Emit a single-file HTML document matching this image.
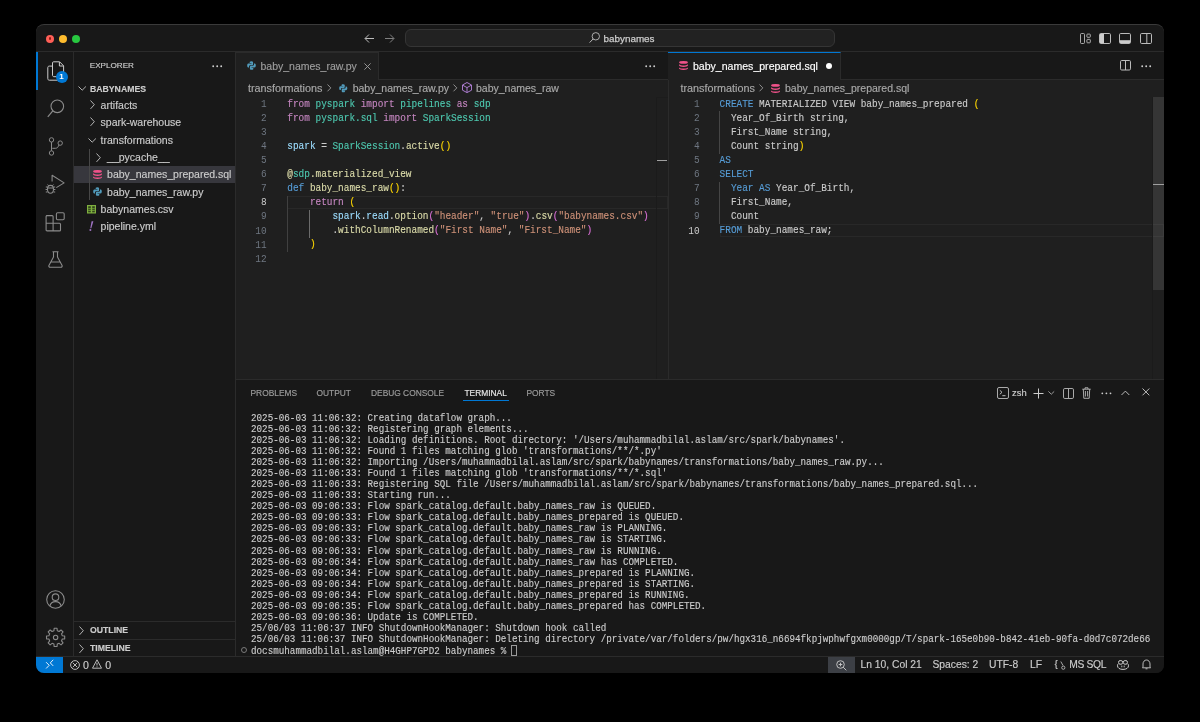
<!DOCTYPE html>
<html><head><meta charset="utf-8">
<style>
html,body{margin:0;padding:0;}
body{width:1200px;height:722px;background:#000;position:relative;overflow:hidden;font-family:"Liberation Sans",sans-serif;color:#cccccc;}
.a{position:absolute;}
#win{will-change:transform;position:absolute;left:36px;top:24px;width:1128px;height:649.3px;border-radius:8px;overflow:hidden;background:#181818;}
#in{position:absolute;left:-36px;top:-24px;width:1200px;height:722px;}
.t{position:absolute;white-space:pre;-webkit-text-stroke-width:0.15px;}
.mono{font-family:"Liberation Mono",monospace;}
.ui{font-size:10.5px;color:#cccccc;}
.code{-webkit-text-stroke-width:0.12px;position:absolute;font-family:"Liberation Mono",monospace;font-size:9.42px;line-height:12.5625px;transform:scaleY(1.12);transform-origin:0 0;white-space:pre;color:#cccccc;}
.ln{position:absolute;font-family:"Liberation Mono",monospace;font-size:9.42px;line-height:12.5625px;transform:scaleY(1.12);transform-origin:0 0;white-space:pre;color:#6e7681;text-align:right;}
.k{color:#c586c0}.c{color:#4ec9b0}.v{color:#9cdcfe}.f{color:#dcdcaa}.b1{color:#ffd700}.b2{color:#da70d6}.s{color:#ce9178}.kw{color:#569cd6}
.term{-webkit-text-stroke-width:0.12px;position:absolute;font-family:"Liberation Mono",monospace;font-size:9.25px;line-height:9.651px;transform:scaleY(1.147);transform-origin:0 0;white-space:pre;color:#cccccc;}
svg{position:absolute;overflow:visible;}
</style></head>
<body>
<div id="win"><div id="in">
  <!-- title bar -->
  <div class="a" style="left:36px;top:24px;width:1128px;height:28px;background:#181818;border-bottom:1px solid #2b2b2b;box-sizing:border-box;"></div>
  <!-- traffic lights -->
  <div class="a" style="left:46px;top:34.5px;width:8px;height:8px;border-radius:50%;background:#ff5f57;"></div>
  <div class="a" style="left:48.6px;top:37px;width:2.8px;height:2.8px;border-radius:50%;background:#8f1d14;"></div>
  <div class="a" style="left:59.2px;top:34.5px;width:8px;height:8px;border-radius:50%;background:#febc2e;"></div>
  <div class="a" style="left:72.2px;top:34.5px;width:8px;height:8px;border-radius:50%;background:#28c840;"></div>
  <!-- nav arrows -->
  <svg style="left:363.8px;top:33px" width="11" height="11" viewBox="0 0 11 11"><path d="M10 5.5H1.2M5 1.5L1 5.5L5 9.5" fill="none" stroke="#bdbdbd" stroke-width="1"/></svg>
  <svg style="left:383.6px;top:33px" width="11" height="11" viewBox="0 0 11 11"><path d="M1 5.5H9.8M6 1.5L10 5.5L6 9.5" fill="none" stroke="#808080" stroke-width="1"/></svg>
  <!-- command center -->
  <div class="a" style="left:405.2px;top:28.8px;width:429.8px;height:18.6px;box-sizing:border-box;border:1px solid #353535;border-radius:6px;background:#222222;"></div>
  <svg style="left:589px;top:32px" width="11" height="11" viewBox="0 0 11 11"><circle cx="6.8" cy="4.3" r="3.7" fill="none" stroke="#bbbbbb" stroke-width="0.9"/><path d="M4.2 6.9L0.6 10.6" stroke="#bbbbbb" stroke-width="1"/></svg>
  <div class="t" style="left:603.5px;top:30.5px;font-size:9.9px;line-height:15px;color:#cccccc;-webkit-text-stroke:0.25px #cccccc;">babynames</div>
  <!-- layout icons -->
  <svg style="left:1079.5px;top:32.7px" width="12" height="11" viewBox="0 0 12 11"><rect x="0.5" y="0.5" width="4" height="10" rx="1" fill="none" stroke="#bbbbbb" stroke-width="0.9"/><rect x="6.9" y="1.1" width="3.4" height="3.2" rx="0.6" fill="none" stroke="#bbbbbb" stroke-width="0.9"/><rect x="6.9" y="6.4" width="3.4" height="3.4" rx="0.6" fill="none" stroke="#bbbbbb" stroke-width="0.9"/></svg>
  <svg style="left:1099px;top:32.5px" width="12" height="11" viewBox="0 0 12 11"><rect x="0.5" y="0.5" width="11" height="10" rx="1.2" fill="none" stroke="#bbbbbb"/><rect x="1" y="1" width="4" height="9" fill="#cccccc"/></svg>
  <svg style="left:1119px;top:32.5px" width="12" height="11" viewBox="0 0 12 11"><rect x="0.5" y="0.5" width="11" height="10" rx="1.2" fill="none" stroke="#bbbbbb"/><rect x="1" y="7.2" width="10" height="2.8" fill="#cccccc"/></svg>
  <svg style="left:1139.5px;top:32.5px" width="12" height="11" viewBox="0 0 12 11"><rect x="0.5" y="0.5" width="11" height="10" rx="1.2" fill="none" stroke="#bbbbbb"/><path d="M6.8 1V10" stroke="#bbbbbb"/></svg>

  <!-- activity bar -->
  <div class="a" style="left:36px;top:52px;width:38px;height:604px;background:#181818;border-right:1px solid #2b2b2b;box-sizing:border-box;"></div>
  <div class="a" style="left:36px;top:52px;width:2px;height:37.5px;background:#0078d4;"></div>


  <!-- activity icons -->
  <svg style="left:46.5px;top:61px" width="18" height="20" viewBox="0 0 18 20"><path d="M5.5 5.1H2.3C1.4 5.1 0.8 5.7 0.8 6.6V17.7C0.8 18.6 1.4 19.2 2.3 19.2H10.2C11.1 19.2 11.7 18.6 11.7 17.7V16.3" fill="none" stroke="#cccccc" stroke-width="1"/><path d="M6.6 0.8H12.6L16.6 4.8V14.2C16.6 15.1 16 15.7 15.1 15.7H7C6.1 15.7 5.5 15.1 5.5 14.2V1.9C5.5 1.2 5.9 0.8 6.6 0.8Z M12.4 1V5H16.4" fill="none" stroke="#cccccc" stroke-width="1"/></svg>
  <div class="a" style="left:55.7px;top:71.2px;width:12px;height:12px;border-radius:50%;background:#0078d4;"></div>
  <div class="t" style="left:59.3px;top:73.2px;font-size:8px;line-height:8px;font-weight:bold;color:#ffffff;-webkit-text-stroke-width:0;">1</div>
  <svg style="left:47px;top:98.8px" width="18" height="19" viewBox="0 0 18 19"><circle cx="10.3" cy="7.3" r="6.3" fill="none" stroke="#8a8a8a" stroke-width="1.1"/><path d="M5.8 11.8L0.8 17.8" stroke="#8a8a8a" stroke-width="1.2"/></svg>
  <svg style="left:47.5px;top:136.5px" width="15" height="19" viewBox="0 0 15 19"><circle cx="3.5" cy="2.9" r="2.2" fill="none" stroke="#8a8a8a" stroke-width="1"/><circle cx="3.5" cy="16" r="2.2" fill="none" stroke="#8a8a8a" stroke-width="1"/><circle cx="12.2" cy="6.1" r="2.2" fill="none" stroke="#8a8a8a" stroke-width="1"/><path d="M3.5 5.1V13.8M11 8C10.2 9.8 9.5 11.3 7.3 11.3H4.3" fill="none" stroke="#8a8a8a" stroke-width="1"/></svg>
  <svg style="left:45px;top:167.5px" width="20" height="26" viewBox="0 0 20 26"><path d="M7.1 13.5V7.2L19.1 14.9L11.3 19.6" fill="none" stroke="#8a8a8a" stroke-width="1.1" stroke-linejoin="round"/><ellipse cx="5.5" cy="21.3" rx="3" ry="3.9" fill="none" stroke="#8a8a8a" stroke-width="1.1"/><path d="M2.5 19H0.8M2.5 21.5H0.6M2.5 24H0.8M8.5 19H10.2M8.5 21.5H10.4M8.5 24H10.2M3.6 17.7L2.6 16.5M7.4 17.7L8.4 16.5M2.6 20H8.4" stroke="#8a8a8a" stroke-width="1"/></svg>
  <svg style="left:45.3px;top:211.8px" width="20" height="20" viewBox="0 0 20 20"><path d="M1.5 3.6H7.1C7.7 3.6 8.1 4 8.1 4.6V11.3H14.5C15.1 11.3 15.5 11.7 15.5 12.3V17.9C15.5 18.5 15.1 18.9 14.5 18.9H2.1C1.5 18.9 1.1 18.5 1.1 17.9V4.6C1.1 4 1.5 3.6 2.1 3.6Z M1.1 11.3H8.1V18.9" fill="none" stroke="#8a8a8a" stroke-width="1.1" stroke-linejoin="round"/><rect x="11.4" y="0.8" width="7.8" height="6.9" rx="1.2" fill="none" stroke="#8a8a8a" stroke-width="1.1"/></svg>
  <svg style="left:47.5px;top:251px" width="15" height="17" viewBox="0 0 15 17"><path d="M4.5 0.8H10.5M5.5 0.8V6L0.9 14.4C0.6 15.3 1.1 16.2 2 16.2H13C13.9 16.2 14.4 15.3 14.1 14.4L9.5 6V0.8M2.8 11H12.2" fill="none" stroke="#8a8a8a" stroke-width="1.1" stroke-linejoin="round"/></svg>
  <svg style="left:45.7px;top:590px" width="19" height="19" viewBox="0 0 19 19"><circle cx="9.5" cy="9.5" r="8.8" fill="none" stroke="#8a8a8a" stroke-width="1.1"/><circle cx="9.5" cy="7.2" r="3.3" fill="none" stroke="#8a8a8a" stroke-width="1.1"/><path d="M3.8 16.2C4.5 13.3 6.5 11.6 9.5 11.6C12.5 11.6 14.5 13.3 15.2 16.2" fill="none" stroke="#8a8a8a" stroke-width="1.1"/></svg>
  <svg style="left:45.7px;top:627.5px" width="19" height="19" viewBox="0 0 19 19"><path d="M7.93 2.70 L8.16 0.31 L11.04 0.31 L11.27 2.70 L13.15 3.49 L15.01 1.96 L17.04 3.99 L15.51 5.85 L16.30 7.73 L18.69 7.96 L18.69 10.84 L16.30 11.07 L15.51 12.95 L17.04 14.81 L15.01 16.84 L13.15 15.31 L11.27 16.10 L11.04 18.49 L8.16 18.49 L7.93 16.10 L6.05 15.31 L4.19 16.84 L2.16 14.81 L3.69 12.95 L2.90 11.07 L0.51 10.84 L0.51 7.96 L2.90 7.73 L3.69 5.85 L2.16 3.99 L4.19 1.96 L6.05 3.49Z" fill="none" stroke="#8a8a8a" stroke-width="1.1" stroke-linejoin="round"/><circle cx="9.6" cy="9.4" r="2.2" fill="none" stroke="#8a8a8a" stroke-width="1.1"/></svg>

  <!-- sidebar -->
  <div class="a" style="left:74px;top:52px;width:162px;height:604px;background:#181818;border-right:1px solid #2b2b2b;box-sizing:border-box;"></div>
  <div class="t" style="left:89.8px;top:60px;font-size:8.1px;line-height:12px;color:#cccccc;">EXPLORER</div>
  <svg style="left:212px;top:64.5px" width="11" height="3" viewBox="0 0 11 3"><circle cx="1.2" cy="1.3" r="0.95" fill="#cccccc"/><circle cx="5.2" cy="1.3" r="0.95" fill="#cccccc"/><circle cx="9.2" cy="1.3" r="0.95" fill="#cccccc"/></svg>


  <!-- explorer tree -->
  <div class="a" style="left:74px;top:166.2px;width:161px;height:16.4px;background:#37373d;"></div>
  <div class="a" style="left:89.4px;top:148.5px;width:1px;height:51.5px;background:#474747;"></div>
  <svg style="left:78px;top:86px" width="9" height="5" viewBox="0 0 9 5"><path d="M0.5 0.5L4.2 4.2L7.9 0.5" fill="none" stroke="#c5c5c5" stroke-width="0.9"/></svg>
  <div class="t" style="left:90px;top:84.5px;font-size:8.7px;line-height:8.5px;font-weight:bold;color:#cccccc;">BABYNAMES</div>
  <svg style="left:90px;top:100px" width="5" height="10" viewBox="0 0 5 10"><path d="M0.5 0.5L4.3 4.7L0.5 8.9" fill="none" stroke="#c5c5c5" stroke-width="0.9"/></svg>
  <div class="t ui" style="left:100.6px;top:100.1px;line-height:10.5px;">artifacts</div>
  <svg style="left:90px;top:117.3px" width="5" height="10" viewBox="0 0 5 10"><path d="M0.5 0.5L4.3 4.7L0.5 8.9" fill="none" stroke="#c5c5c5" stroke-width="0.9"/></svg>
  <div class="t ui" style="left:100.6px;top:117.3px;line-height:10.5px;">spark-warehouse</div>
  <svg style="left:88px;top:138.2px" width="9" height="5" viewBox="0 0 9 5"><path d="M0.5 0.5L4.2 4.2L7.9 0.5" fill="none" stroke="#c5c5c5" stroke-width="0.9"/></svg>
  <div class="t ui" style="left:100.6px;top:134.6px;line-height:10.5px;">transformations</div>
  <svg style="left:96.2px;top:152.5px" width="5" height="10" viewBox="0 0 5 10"><path d="M0.5 0.5L4.3 4.7L0.5 8.9" fill="none" stroke="#c5c5c5" stroke-width="0.9"/></svg>
  <div class="t ui" style="left:107.1px;top:151.9px;line-height:10.5px;">__pycache__</div>
  <!-- sql icon -->
  <svg style="left:93px;top:170px" width="9" height="9" viewBox="0 0 9 9"><g fill="#f0528a"><ellipse cx="4.5" cy="1.4" rx="4.4" ry="1.4"/><path d="M0.1 3.2C1 4.1 2.6 4.4 4.5 4.4C6.4 4.4 8 4.1 8.9 3.2V4.6C8.9 5.5 6.9 6 4.5 6C2.1 6 0.1 5.5 0.1 4.6Z"/><path d="M0.1 6.4C1 7.3 2.6 7.6 4.5 7.6C6.4 7.6 8 7.3 8.9 6.4V7.6C8.9 8.4 6.9 8.9 4.5 8.9C2.1 8.9 0.1 8.4 0.1 7.6Z"/></g></svg>
  <div class="t ui" style="left:107.1px;top:169.2px;line-height:10.5px;">baby_names_prepared.sql</div>
  <!-- python icon -->
  <svg style="left:93px;top:187.3px" width="9" height="9" viewBox="0 0 9 9"><path d="M4.4 0.2C2.6 0.2 2.7 1 2.7 1V2.1H4.5V2.5H1.5C1.5 2.5 0.2 2.4 0.2 4.4C0.2 6.4 1.3 6.4 1.3 6.4H2V5.4C2 5.4 2 4.3 3.1 4.3H5C5 4.3 6.1 4.3 6.1 3.3V1.3C6.1 1.3 6.2 0.2 4.4 0.2Z" fill="#519aba"/><path d="M4.6 8.8C6.4 8.8 6.3 8 6.3 8V6.9H4.5V6.5H7.5C7.5 6.5 8.8 6.6 8.8 4.6C8.8 2.6 7.7 2.6 7.7 2.6H7V3.6C7 3.6 7 4.7 5.9 4.7H4C4 4.7 2.9 4.7 2.9 5.7V7.7C2.9 7.7 2.8 8.8 4.6 8.8Z" fill="#519aba"/></svg>
  <div class="t ui" style="left:107.1px;top:186.5px;line-height:10.5px;">baby_names_raw.py</div>
  <!-- csv icon -->
  <svg style="left:86.5px;top:204.6px" width="9" height="8.5" viewBox="0 0 9 8.5"><rect x="0" y="0" width="9" height="8.5" fill="#7fb03f"/><g fill="#31421c"><rect x="1.2" y="1.2" width="2.6" height="6.1"/><rect x="5.2" y="1.2" width="2.6" height="6.1"/></g><g fill="#7fb03f"><rect x="1.2" y="3.4" width="6.6" height="0.7"/><rect x="1.2" y="5.3" width="6.6" height="0.7"/></g></svg>
  <div class="t ui" style="left:100.6px;top:203.7px;line-height:10.5px;">babynames.csv</div>
  <svg style="left:88.5px;top:221px" width="5" height="10" viewBox="0 0 5 10"><path d="M2.6 0.3L4.4 0.3L2.3 7.2L1.3 7.2Z" fill="#a074c4"/><circle cx="1.4" cy="9" r="1" fill="#a074c4"/></svg>
  <div class="t ui" style="left:100.6px;top:221px;line-height:10.5px;">pipeline.yml</div>
  <!-- outline / timeline -->
  <div class="a" style="left:74px;top:621px;width:161px;height:1px;background:#2b2b2b;"></div>
  <div class="a" style="left:74px;top:639px;width:161px;height:1px;background:#2b2b2b;"></div>
  <svg style="left:79px;top:626px" width="5" height="10" viewBox="0 0 5 10"><path d="M0.5 0.5L4.3 4.7L0.5 8.9" fill="none" stroke="#c5c5c5" stroke-width="0.9"/></svg>
  <div class="t" style="left:90px;top:626.3px;font-size:8.7px;line-height:8.5px;font-weight:bold;color:#cccccc;">OUTLINE</div>
  <svg style="left:79px;top:643.6px" width="5" height="10" viewBox="0 0 5 10"><path d="M0.5 0.5L4.3 4.7L0.5 8.9" fill="none" stroke="#c5c5c5" stroke-width="0.9"/></svg>
  <div class="t" style="left:90px;top:643.7px;font-size:8.7px;line-height:8.5px;font-weight:bold;color:#cccccc;">TIMELINE</div>

  <!-- editor group 1 -->
  <div class="a" style="left:236px;top:52px;width:433px;height:328px;background:#1f1f1f;"></div>
  <div class="a" style="left:236px;top:52px;width:433px;height:27.5px;background:#181818;border-bottom:1px solid #2b2b2b;box-sizing:border-box;"></div>
  <div class="a" style="left:236px;top:52px;width:143px;height:28px;background:#1f1f1f;border-right:1px solid #2b2b2b;border-top:1px solid #2b2b2b;box-sizing:border-box;"></div>

  <!-- editor group 2 -->
  <div class="a" style="left:668px;top:52px;width:496px;height:328px;background:#1f1f1f;border-left:1px solid #2b2b2b;box-sizing:border-box;"></div>
  <div class="a" style="left:668px;top:52px;width:496px;height:27.5px;background:#181818;border-bottom:1px solid #2b2b2b;border-left:1px solid #2b2b2b;box-sizing:border-box;"></div>
  <div class="a" style="left:668px;top:52px;width:173px;height:28px;background:#1f1f1f;border-right:1px solid #2b2b2b;border-top:1px solid #0078d4;box-sizing:border-box;"></div>


  <!-- tab 1 -->
  <svg style="left:246.6px;top:61.4px" width="9" height="9" viewBox="0 0 9 9"><path d="M4.4 0.2C2.6 0.2 2.7 1 2.7 1V2.1H4.5V2.5H1.5C1.5 2.5 0.2 2.4 0.2 4.4C0.2 6.4 1.3 6.4 1.3 6.4H2V5.4C2 5.4 2 4.3 3.1 4.3H5C5 4.3 6.1 4.3 6.1 3.3V1.3C6.1 1.3 6.2 0.2 4.4 0.2Z" fill="#519aba"/><path d="M4.6 8.8C6.4 8.8 6.3 8 6.3 8V6.9H4.5V6.5H7.5C7.5 6.5 8.8 6.6 8.8 4.6C8.8 2.6 7.7 2.6 7.7 2.6H7V3.6C7 3.6 7 4.7 5.9 4.7H4C4 4.7 2.9 4.7 2.9 5.7V7.7C2.9 7.7 2.8 8.8 4.6 8.8Z" fill="#519aba"/></svg>
  <div class="t" style="left:260.5px;top:60.6px;font-size:10.5px;line-height:10.4px;color:#9d9d9d;">baby_names_raw.py</div>
  <svg style="left:364px;top:62.5px" width="7" height="7" viewBox="0 0 7 7"><path d="M0.4 0.4L6.6 6.6M6.6 0.4L0.4 6.6" stroke="#a0a0a0" stroke-width="0.9"/></svg>
  <svg style="left:645px;top:64.5px" width="11" height="3" viewBox="0 0 11 3"><circle cx="1.2" cy="1.3" r="0.95" fill="#cccccc"/><circle cx="5.2" cy="1.3" r="0.95" fill="#cccccc"/><circle cx="9.2" cy="1.3" r="0.95" fill="#cccccc"/></svg>
  <!-- breadcrumb 1 -->
  <div class="t" style="left:248px;top:82.7px;font-size:10.8px;line-height:10.5px;color:#a9a9a9;">transformations</div>
  <svg style="left:326.8px;top:83.7px" width="5" height="8" viewBox="0 0 5 8"><path d="M0.5 0.5L3.8 3.9L0.5 7.3" fill="none" stroke="#a9a9a9" stroke-width="0.8"/></svg>
  <svg style="left:338.5px;top:83.8px" width="8.5" height="8.5" viewBox="0 0 9 9"><path d="M4.4 0.2C2.6 0.2 2.7 1 2.7 1V2.1H4.5V2.5H1.5C1.5 2.5 0.2 2.4 0.2 4.4C0.2 6.4 1.3 6.4 1.3 6.4H2V5.4C2 5.4 2 4.3 3.1 4.3H5C5 4.3 6.1 4.3 6.1 3.3V1.3C6.1 1.3 6.2 0.2 4.4 0.2Z" fill="#519aba"/><path d="M4.6 8.8C6.4 8.8 6.3 8 6.3 8V6.9H4.5V6.5H7.5C7.5 6.5 8.8 6.6 8.8 4.6C8.8 2.6 7.7 2.6 7.7 2.6H7V3.6C7 3.6 7 4.7 5.9 4.7H4C4 4.7 2.9 4.7 2.9 5.7V7.7C2.9 7.7 2.8 8.8 4.6 8.8Z" fill="#519aba"/></svg>
  <div class="t" style="left:352.7px;top:82.9px;font-size:10.5px;line-height:10.5px;color:#a9a9a9;">baby_names_raw.py</div>
  <svg style="left:453.2px;top:83.7px" width="5" height="8" viewBox="0 0 5 8"><path d="M0.5 0.5L3.8 3.9L0.5 7.3" fill="none" stroke="#a9a9a9" stroke-width="0.8"/></svg>
  <svg style="left:462px;top:82.3px" width="10" height="11" viewBox="0 0 10 11"><path d="M5 0.5L9.5 3V8.2L5 10.6L0.5 8.2V3Z M0.7 3.2L5 5.6L9.3 3.2 M5 5.6V10.4" fill="none" stroke="#b180d7" stroke-width="0.95" stroke-linejoin="round"/></svg>
  <div class="t" style="left:476px;top:82.9px;font-size:10.5px;line-height:10.5px;color:#a9a9a9;">baby_names_raw</div>
  <!-- code 1 -->
  <div class="ln" style="left:236px;top:97.90px;width:30.6px;">1</div>
  <div class="ln" style="left:236px;top:111.97px;width:30.6px;">2</div>
  <div class="ln" style="left:236px;top:126.04px;width:30.6px;">3</div>
  <div class="ln" style="left:236px;top:140.11px;width:30.6px;">4</div>
  <div class="ln" style="left:236px;top:154.18px;width:30.6px;">5</div>
  <div class="ln" style="left:236px;top:168.25px;width:30.6px;">6</div>
  <div class="ln" style="left:236px;top:182.32px;width:30.6px;">7</div>
  <div class="ln" style="left:236px;top:196.39px;width:30.6px;"><span style="color:#cccccc">8</span></div>
  <div class="ln" style="left:236px;top:210.46px;width:30.6px;">9</div>
  <div class="ln" style="left:236px;top:224.53px;width:30.6px;">10</div>
  <div class="ln" style="left:236px;top:238.60px;width:30.6px;">11</div>
  <div class="ln" style="left:236px;top:252.67px;width:30.6px;">12</div>
  <div class="a" style="left:287px;top:195.6px;width:381px;height:13.9px;box-sizing:border-box;border:1px solid #282828;"></div>
  <div class="a" style="left:287.1px;top:195.6px;width:1px;height:56.6px;background:#404040;"></div>
  <div class="a" style="left:309.3px;top:209.7px;width:1px;height:28.1px;background:#6b6b6b;"></div>
  <div class="code" style="left:287.3px;top:97.70px;"><span class="k">from</span> <span class="c">pyspark</span> <span class="k">import</span> <span class="c">pipelines</span> <span class="k">as</span> <span class="c">sdp</span></div>
  <div class="code" style="left:287.3px;top:111.77px;"><span class="k">from</span> <span class="c">pyspark.sql</span> <span class="k">import</span> <span class="c">SparkSession</span></div>
  <div class="code" style="left:287.3px;top:139.91px;"><span class="v">spark</span> = <span class="c">SparkSession</span>.<span class="f">active</span><span class="b1">()</span></div>
  <div class="code" style="left:287.3px;top:168.05px;"><span class="f">@</span><span class="c">sdp</span><span class="f">.materialized_view</span></div>
  <div class="code" style="left:287.3px;top:182.12px;"><span class="kw">def</span> <span class="f">baby_names_raw</span><span class="b1">()</span>:</div>
  <div class="code" style="left:287.3px;top:196.19px;">    <span class="k">return</span> <span class="b1">(</span></div>
  <div class="code" style="left:287.3px;top:210.26px;">        <span class="v">spark</span>.<span class="v">read</span>.<span class="f">option</span><span class="b2">(</span><span class="s">"header"</span>, <span class="s">"true"</span><span class="b2">)</span>.<span class="f">csv</span><span class="b2">(</span><span class="s">"babynames.csv"</span><span class="b2">)</span></div>
  <div class="code" style="left:287.3px;top:224.33px;">        .<span class="f">withColumnRenamed</span><span class="b2">(</span><span class="s">"First Name"</span>, <span class="s">"First_Name"</span><span class="b2">)</span></div>
  <div class="code" style="left:287.3px;top:238.40px;">    <span class="b1">)</span></div>
  <!-- scrollbar 1 -->
  <div class="a" style="left:656.3px;top:96.5px;width:1.2px;height:283px;background:#1b1b1b;"></div><div class="a" style="left:656.3px;top:96.5px;width:11.7px;height:1px;background:#1c1c1c;"></div>
  <div class="a" style="left:657px;top:159.5px;width:10px;height:1.3px;background:#a0a0a0;"></div>

  <!-- tab 2 -->
  <svg style="left:679px;top:61.3px" width="9" height="9" viewBox="0 0 9 9"><g fill="#f0528a"><ellipse cx="4.5" cy="1.4" rx="4.4" ry="1.4"/><path d="M0.1 3.2C1 4.1 2.6 4.4 4.5 4.4C6.4 4.4 8 4.1 8.9 3.2V4.6C8.9 5.5 6.9 6 4.5 6C2.1 6 0.1 5.5 0.1 4.6Z"/><path d="M0.1 6.4C1 7.3 2.6 7.6 4.5 7.6C6.4 7.6 8 7.3 8.9 6.4V7.6C8.9 8.4 6.9 8.9 4.5 8.9C2.1 8.9 0.1 8.4 0.1 7.6Z"/></g></svg>
  <div class="t" style="left:693px;top:60.6px;font-size:10.55px;line-height:10.4px;color:#ffffff;">baby_names_prepared.sql</div>
  <div class="a" style="left:826px;top:62.6px;width:6.4px;height:6.4px;border-radius:50%;background:#ffffff;"></div>
  <svg style="left:1120px;top:60.3px" width="11" height="10.5" viewBox="0 0 11 10.5"><rect x="0.5" y="0.5" width="10" height="9.5" rx="1.2" fill="none" stroke="#bbbbbb"/><path d="M5.5 1V10" stroke="#bbbbbb"/></svg>
  <svg style="left:1140.5px;top:64.5px" width="11" height="3" viewBox="0 0 11 3"><circle cx="1.2" cy="1.3" r="0.95" fill="#cccccc"/><circle cx="5.2" cy="1.3" r="0.95" fill="#cccccc"/><circle cx="9.2" cy="1.3" r="0.95" fill="#cccccc"/></svg>
  <!-- breadcrumb 2 -->
  <div class="t" style="left:680.5px;top:82.7px;font-size:10.8px;line-height:10.5px;color:#a9a9a9;">transformations</div>
  <svg style="left:759px;top:83.7px" width="5" height="8" viewBox="0 0 5 8"><path d="M0.5 0.5L3.8 3.9L0.5 7.3" fill="none" stroke="#a9a9a9" stroke-width="0.8"/></svg>
  <svg style="left:771px;top:83.5px" width="9" height="9" viewBox="0 0 9 9"><g fill="#f0528a"><ellipse cx="4.5" cy="1.4" rx="4.4" ry="1.4"/><path d="M0.1 3.2C1 4.1 2.6 4.4 4.5 4.4C6.4 4.4 8 4.1 8.9 3.2V4.6C8.9 5.5 6.9 6 4.5 6C2.1 6 0.1 5.5 0.1 4.6Z"/><path d="M0.1 6.4C1 7.3 2.6 7.6 4.5 7.6C6.4 7.6 8 7.3 8.9 6.4V7.6C8.9 8.4 6.9 8.9 4.5 8.9C2.1 8.9 0.1 8.4 0.1 7.6Z"/></g></svg>
  <div class="t" style="left:785px;top:82.9px;font-size:10.5px;line-height:10.5px;color:#a9a9a9;">baby_names_prepared.sql</div>
  <!-- code 2 -->
  <div class="ln" style="left:669px;top:97.90px;width:30.6px;">1</div>
  <div class="ln" style="left:669px;top:111.97px;width:30.6px;">2</div>
  <div class="ln" style="left:669px;top:126.04px;width:30.6px;">3</div>
  <div class="ln" style="left:669px;top:140.11px;width:30.6px;">4</div>
  <div class="ln" style="left:669px;top:154.18px;width:30.6px;">5</div>
  <div class="ln" style="left:669px;top:168.25px;width:30.6px;">6</div>
  <div class="ln" style="left:669px;top:182.32px;width:30.6px;">7</div>
  <div class="ln" style="left:669px;top:196.39px;width:30.6px;">8</div>
  <div class="ln" style="left:669px;top:210.46px;width:30.6px;">9</div>
  <div class="ln" style="left:669px;top:224.53px;width:30.6px;"><span style="color:#cccccc">10</span></div>
  <div class="a" style="left:719.6px;top:223.6px;width:444.4px;height:13.8px;box-sizing:border-box;border:1px solid #282828;"></div>
  <div class="a" style="left:719.2px;top:111.4px;width:1.2px;height:42.4px;background:#454545;"></div>
  <div class="a" style="left:719.2px;top:182.1px;width:1.2px;height:42.4px;background:#454545;"></div>
  <div class="code" style="left:719.6px;top:97.70px;"><span class="kw">CREATE</span> MATERIALIZED VIEW baby_names_prepared <span class="b1">(</span></div>
  <div class="code" style="left:719.6px;top:111.77px;">  Year_Of_Birth string,</div>
  <div class="code" style="left:719.6px;top:125.84px;">  First_Name string,</div>
  <div class="code" style="left:719.6px;top:139.91px;">  Count string<span class="b1">)</span></div>
  <div class="code" style="left:719.6px;top:153.98px;"><span class="kw">AS</span></div>
  <div class="code" style="left:719.6px;top:168.05px;"><span class="kw">SELECT</span></div>
  <div class="code" style="left:719.6px;top:182.12px;">  <span class="kw">Year AS</span> Year_Of_Birth,</div>
  <div class="code" style="left:719.6px;top:196.19px;">  First_Name,</div>
  <div class="code" style="left:719.6px;top:210.26px;">  Count</div>
  <div class="code" style="left:719.6px;top:224.33px;"><span class="kw">FROM</span> baby_names_raw;</div>
  <!-- scrollbar 2 -->
  <div class="a" style="left:1152px;top:96.5px;width:1.2px;height:283px;background:#1b1b1b;"></div>
  <div class="a" style="left:1152.5px;top:97px;width:11.5px;height:193px;background:rgba(255,255,255,0.1);"></div>
  <div class="a" style="left:1152.5px;top:183.6px;width:11.5px;height:1.3px;background:#a0a0a0;"></div>

  <!-- panel -->
  <div class="a" style="left:236px;top:379px;width:928px;height:277px;background:#181818;border-top:1px solid #2b2b2b;box-sizing:border-box;"></div>

  <!-- panel content -->
  <!-- panel tabs -->
  <div class="t" style="left:250.5px;top:388.6px;font-size:8.4px;line-height:8.4px;color:#9d9d9d;">PROBLEMS</div>
  <div class="t" style="left:316.5px;top:388.6px;font-size:8.4px;line-height:8.4px;color:#9d9d9d;">OUTPUT</div>
  <div class="t" style="left:371px;top:388.6px;font-size:8.4px;line-height:8.4px;color:#9d9d9d;">DEBUG CONSOLE</div>
  <div class="t" style="left:464.5px;top:388.6px;font-size:8.4px;line-height:8.4px;color:#e7e7e7;">TERMINAL</div>
  <div class="a" style="left:462.9px;top:400.2px;width:46px;height:1px;background:#0078d4;"></div>
  <div class="t" style="left:526.5px;top:388.6px;font-size:8.4px;line-height:8.4px;color:#9d9d9d;">PORTS</div>
  <!-- panel actions -->
  <svg style="left:997px;top:387.3px" width="12" height="12" viewBox="0 0 12 12"><rect x="0.5" y="0.5" width="11" height="11" rx="1.5" fill="none" stroke="#bbbbbb" stroke-width="0.9"/><path d="M2.8 3.3L5 5.3L2.8 7.3M5.3 8.7H8.5" fill="none" stroke="#cccccc" stroke-width="0.9"/></svg>
  <div class="t" style="left:1012px;top:388.2px;font-size:9.4px;line-height:9.4px;color:#cccccc;">zsh</div>
  <svg style="left:1033px;top:387.5px" width="11" height="11" viewBox="0 0 11 11"><path d="M5.5 0.5V10.5M0.5 5.5H10.5" stroke="#cccccc" stroke-width="1"/></svg>
  <svg style="left:1047.8px;top:391.2px" width="7" height="4" viewBox="0 0 7 4"><path d="M0.4 0.4L3.3 3.2L6.2 0.4" fill="none" stroke="#bbbbbb" stroke-width="0.8"/></svg>
  <svg style="left:1063px;top:387.5px" width="11" height="11" viewBox="0 0 11 11"><rect x="0.5" y="0.5" width="10" height="10" rx="1.3" fill="none" stroke="#bbbbbb" stroke-width="0.9"/><path d="M5.5 1V10" stroke="#bbbbbb" stroke-width="0.9"/></svg>
  <svg style="left:1082px;top:387px" width="9" height="12" viewBox="0 0 9 12"><path d="M0.3 2.2H8.7M3 2.2V0.8H6V2.2M1.3 2.2L1.8 11.3H7.2L7.7 2.2M3.4 4V9.5M5.6 4V9.5" fill="none" stroke="#bbbbbb" stroke-width="0.9"/></svg>
  <svg style="left:1101px;top:392px" width="11" height="3" viewBox="0 0 11 3"><circle cx="1.3" cy="1.3" r="0.9" fill="#cccccc"/><circle cx="5.4" cy="1.3" r="0.9" fill="#cccccc"/><circle cx="9.5" cy="1.3" r="0.9" fill="#cccccc"/></svg>
  <svg style="left:1120.5px;top:389.5px" width="9" height="6" viewBox="0 0 9 6"><path d="M0.5 5L4.4 1.1L8.3 5" fill="none" stroke="#cccccc" stroke-width="0.9"/></svg>
  <svg style="left:1142px;top:388px" width="8" height="8" viewBox="0 0 8 8"><path d="M0.5 0.5L7.3 7.3M7.3 0.5L0.5 7.3" stroke="#cccccc" stroke-width="0.9"/></svg>
  <!-- terminal -->
  <div class="term" style="left:251px;top:412.70px;">2025-06-03 11:06:32: Creating dataflow graph...</div>
  <div class="term" style="left:251px;top:423.77px;">2025-06-03 11:06:32: Registering graph elements...</div>
  <div class="term" style="left:251px;top:434.84px;">2025-06-03 11:06:32: Loading definitions. Root directory: '/Users/muhammadbilal.aslam/src/spark/babynames'.</div>
  <div class="term" style="left:251px;top:445.91px;">2025-06-03 11:06:32: Found 1 files matching glob 'transformations/**/*.py'</div>
  <div class="term" style="left:251px;top:456.98px;">2025-06-03 11:06:32: Importing /Users/muhammadbilal.aslam/src/spark/babynames/transformations/baby_names_raw.py...</div>
  <div class="term" style="left:251px;top:468.05px;">2025-06-03 11:06:33: Found 1 files matching glob 'transformations/**/*.sql'</div>
  <div class="term" style="left:251px;top:479.12px;">2025-06-03 11:06:33: Registering SQL file /Users/muhammadbilal.aslam/src/spark/babynames/transformations/baby_names_prepared.sql...</div>
  <div class="term" style="left:251px;top:490.19px;">2025-06-03 11:06:33: Starting run...</div>
  <div class="term" style="left:251px;top:501.26px;">2025-06-03 09:06:33: Flow spark_catalog.default.baby_names_raw is QUEUED.</div>
  <div class="term" style="left:251px;top:512.33px;">2025-06-03 09:06:33: Flow spark_catalog.default.baby_names_prepared is QUEUED.</div>
  <div class="term" style="left:251px;top:523.40px;">2025-06-03 09:06:33: Flow spark_catalog.default.baby_names_raw is PLANNING.</div>
  <div class="term" style="left:251px;top:534.47px;">2025-06-03 09:06:33: Flow spark_catalog.default.baby_names_raw is STARTING.</div>
  <div class="term" style="left:251px;top:545.54px;">2025-06-03 09:06:33: Flow spark_catalog.default.baby_names_raw is RUNNING.</div>
  <div class="term" style="left:251px;top:556.61px;">2025-06-03 09:06:34: Flow spark_catalog.default.baby_names_raw has COMPLETED.</div>
  <div class="term" style="left:251px;top:567.68px;">2025-06-03 09:06:34: Flow spark_catalog.default.baby_names_prepared is PLANNING.</div>
  <div class="term" style="left:251px;top:578.75px;">2025-06-03 09:06:34: Flow spark_catalog.default.baby_names_prepared is STARTING.</div>
  <div class="term" style="left:251px;top:589.82px;">2025-06-03 09:06:34: Flow spark_catalog.default.baby_names_prepared is RUNNING.</div>
  <div class="term" style="left:251px;top:600.89px;">2025-06-03 09:06:35: Flow spark_catalog.default.baby_names_prepared has COMPLETED.</div>
  <div class="term" style="left:251px;top:611.96px;">2025-06-03 09:06:36: Update is COMPLETED.</div>
  <div class="term" style="left:251px;top:623.03px;">25/06/03 11:06:37 INFO ShutdownHookManager: Shutdown hook called</div>
  <div class="term" style="left:251px;top:634.10px;">25/06/03 11:06:37 INFO ShutdownHookManager: Deleting directory /private/var/folders/pw/hgx316_n6694fkpjwphwfgxm0000gp/T/spark-165e0b90-b842-41eb-90fa-d0d7c072de66</div>
  <div class="term" style="left:251px;top:646.07px;">docsmuhammadbilal.aslam@H4GHP7GPD2 babynames % </div>
  <div class="a" style="left:240.9px;top:647.1px;width:6px;height:6px;box-sizing:border-box;border:1px solid #7a7a7a;border-radius:50%;"></div>
  <div class="a" style="left:511.1px;top:644.9px;width:6.4px;height:11.1px;box-sizing:border-box;border:1px solid #9a9a9a;"></div>

  <!-- status bar -->
  <div class="a" style="left:36px;top:656px;width:1128px;height:18px;background:#181818;border-top:1px solid #2b2b2b;box-sizing:border-box;"></div>
  <div class="a" style="left:36px;top:656.6px;width:27px;height:17.4px;background:#0078d4;"></div>

  <svg style="left:45px;top:659px" width="10" height="11" viewBox="0 0 10 11"><path d="M1.1 3.2L4.2 6.3L1.1 9.5M8.2 0.8L5.3 3.9L8.2 6.9" fill="none" stroke="#ffffff" stroke-width="0.9"/></svg>
  <svg style="left:70px;top:659.5px" width="10" height="10" viewBox="0 0 10 10"><circle cx="5" cy="5" r="4.4" fill="none" stroke="#cccccc" stroke-width="0.9"/><path d="M2.7 2.7L7.3 7.3M7.3 2.7L2.7 7.3" stroke="#cccccc" stroke-width="0.9"/></svg>
  <div class="t" style="left:82.9px;top:660.5px;font-size:10.6px;line-height:9.9px;color:#cccccc;">0</div>
  <svg style="left:92px;top:659.2px" width="10" height="10" viewBox="0 0 10 10"><path d="M5 0.8L9.5 9.2H0.5Z" fill="none" stroke="#cccccc" stroke-width="0.9" stroke-linejoin="round"/><path d="M5 3.7V6.5" stroke="#cccccc" stroke-width="0.9"/><circle cx="5" cy="7.8" r="0.5" fill="#cccccc"/></svg>
  <div class="t" style="left:105.2px;top:660.5px;font-size:10.6px;line-height:9.9px;color:#cccccc;">0</div>
  <div class="a" style="left:827.8px;top:657px;width:27.2px;height:17px;background:#3c3f45;"></div>
  <svg style="left:836px;top:659.5px" width="11" height="11" viewBox="0 0 11 11"><circle cx="4.5" cy="4.5" r="3.8" fill="none" stroke="#cccccc" stroke-width="0.9"/><path d="M7.2 7.2L10.3 10.3M4.5 2.7V6.3M2.7 4.5H6.3" stroke="#cccccc" stroke-width="0.9"/></svg>
  <div class="t" style="left:860.5px;top:660px;font-size:10.3px;line-height:9.9px;color:#cccccc;">Ln 10, Col 21</div>
  <div class="t" style="left:932.5px;top:660px;font-size:10.3px;line-height:9.9px;color:#cccccc;">Spaces: 2</div>
  <div class="t" style="left:989px;top:660px;font-size:10.3px;line-height:9.9px;color:#cccccc;">UTF-8</div>
  <div class="t" style="left:1030px;top:660px;font-size:10.3px;line-height:9.9px;color:#cccccc;">LF</div>
  <div class="t" style="left:1054.5px;top:658.8px;font-size:9.9px;line-height:9.9px;color:#cccccc;">{</div>
  <svg style="left:1059.5px;top:660.5px" width="6" height="9" viewBox="0 0 6 9"><path d="M0.8 0.5L3 4.5" stroke="#cccccc" stroke-width="0.8"/><circle cx="3.3" cy="6.7" r="1.6" fill="none" stroke="#cccccc" stroke-width="0.8"/></svg>
  <div class="t" style="left:1069.3px;top:660px;font-size:10.3px;line-height:9.9px;color:#cccccc;letter-spacing:-0.35px;">MS SQL</div>
  <svg style="left:1117px;top:660px" width="12" height="10" viewBox="0 0 12 10"><rect x="1.6" y="0.6" width="4" height="3.6" rx="1.5" fill="none" stroke="#cccccc" stroke-width="1"/><rect x="6.4" y="0.6" width="4" height="3.6" rx="1.5" fill="none" stroke="#cccccc" stroke-width="1"/><path d="M1.3 3.8C0.6 4.3 0.5 5 0.5 5.8C0.5 8 2.7 9.4 6 9.4C9.3 9.4 11.5 8 11.5 5.8C11.5 5 11.4 4.3 10.7 3.8" fill="none" stroke="#cccccc" stroke-width="1"/><path d="M4.8 5.6V7.3M7.2 5.6V7.3" stroke="#cccccc" stroke-width="0.9"/></svg>
  <svg style="left:1142px;top:658.7px" width="9" height="11" viewBox="0 0 9 11"><path d="M1 8.2V5C1 2.6 2.6 1 4.5 1C6.4 1 8 2.6 8 5V8.2L8.6 8.8H0.4Z" fill="none" stroke="#cccccc" stroke-width="0.9" stroke-linejoin="round"/><path d="M3.5 9.8H5.5" stroke="#cccccc" stroke-width="0.9"/></svg>

  <div class="a" style="left:36px;top:24px;width:1128px;height:650px;box-sizing:border-box;border-radius:8px;border-top:1.5px solid #3a3a3a;"></div>
</div></div>
</body></html>
